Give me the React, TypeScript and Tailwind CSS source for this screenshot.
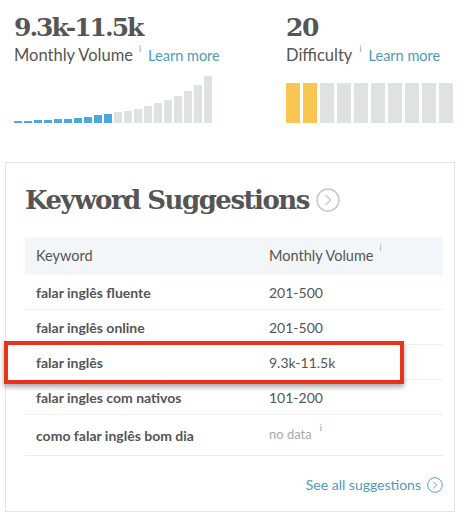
import React from "react"

const volumeBars = [2, 2, 3, 3, 4, 4, 5, 6, 8, 9, 11, 12, 14, 17, 20, 23, 27, 32, 38, 47]

const rows = [
    { keyword: "falar inglês fluente", volume: "201-500" },
    { keyword: "falar inglês online", volume: "201-500" },
    { keyword: "falar inglês", volume: "9.3k-11.5k" },
    { keyword: "falar ingles com nativos", volume: "101-200" },
    { keyword: "como falar inglês bom dia", volume: "no data" },
]

function CircleChevron({ className }: { className?: string }) {
    return (
        <svg viewBox="0 0 24 24" className={className} fill="none" stroke="currentColor" strokeWidth="1.4">
            <circle cx="12" cy="12" r="11" />
            <path d="M10 7.5l4.5 4.5-4.5 4.5" strokeLinecap="round" strokeLinejoin="round" />
        </svg>
    )
}

function Info({ className }: { className?: string }) {
    return <span className={"text-[9px] leading-none text-[#9a9a9a] font-['Lato'] " + (className ?? "")}>i</span>
}

export default function App() {
    return (
        <div className="relative w-[465px] h-[515px] bg-white overflow-hidden font-['Lato','Open_Sans',sans-serif] text-[#555]">
            <div className="flex pt-[12px]">
                <div className="pl-[14px] w-[272px]">
                    <div className="font-['DejaVu_Serif',serif] font-bold text-[25px] leading-[32px] tracking-[-2px] text-[#555]">9.3k-11.5k</div>
                    <div className="flex items-start mt-[1px] h-[20px]">
                        <span className="text-[16.5px] leading-[20px] text-[#555]">Monthly Volume</span>
                        <Info className="ml-[6px] -mt-[1px]" />
                        <span className="ml-[7px] text-[14.5px] leading-[22px] text-[#4d9ab8]">Learn more</span>
                    </div>
                    <div className="flex items-end gap-[2px] h-[48px] mt-[10px]">
                        {volumeBars.map((h, i) => (
                            <div
                                key={i}
                                className={"w-[8px] " + (i < 10 ? "bg-[#4aa8dc]" : "bg-[#dfe2e3]")}
                                style={{ height: h }}
                            />
                        ))}
                    </div>
                </div>
                <div className="pl-[14px]">
                    <div className="font-['DejaVu_Serif',serif] font-bold text-[25px] leading-[32px] tracking-[-1.5px] text-[#555]">20</div>
                    <div className="flex items-start mt-[1px] h-[20px]">
                        <span className="text-[16.5px] leading-[20px] text-[#555]">Difficulty</span>
                        <Info className="ml-[7px] -mt-[1px]" />
                        <span className="ml-[7px] text-[14.5px] leading-[22px] text-[#4d9ab8]">Learn more</span>
                    </div>
                    <div className="flex gap-[3px] h-[40px] mt-[18px]">
                        {Array.from({ length: 10 }).map((_, i) => (
                            <div key={i} className={"w-[14px] " + (i < 2 ? "bg-[#f9c74f]" : "bg-[#dfe2e3]")} />
                        ))}
                    </div>
                </div>
            </div>

            <div className="mx-[5px] mt-[39px] w-[450px] h-[350px] border border-[#e3e3e3] px-[19px]">
                <div className="flex items-center mt-[21px] h-[32px]">
                    <h2 className="font-['DejaVu_Serif',serif] font-bold text-[26px] leading-[32px] tracking-[-1.5px] text-[#555]">Keyword Suggestions</h2>
                    <CircleChevron className="ml-[7px] w-[24px] h-[24px] text-[#c4c4c4]" />
                </div>
                <div className="mt-[21px] w-[418px]">
                    <div className="flex items-center h-[38px] bg-[#f3f6f8] text-[14.5px] text-[#555]">
                        <div className="w-[244px] pl-[11px]">Keyword</div>
                        <div className="flex items-start">
                            <span>Monthly Volume</span>
                            <Info className="ml-[6px] -mt-[2px] text-[#aaa]" />
                        </div>
                    </div>
                    {rows.map((r, i) => (
                        <div key={i} className={"flex items-center text-[14px] " + (i < rows.length - 1 ? "h-[35px] border-b border-[#f0f0f0]" : "h-[41px] border-b border-[#ececec]")}>
                            <div className="w-[244px] pl-[11px] font-bold text-[#555]">{r.keyword}</div>
                            {r.volume === "no data" ? (
                                <div className="flex items-start text-[13px] text-[#aaa]">
                                    <span>no data</span>
                                    <Info className="ml-[8px] -mt-[2px]" />
                                </div>
                            ) : (
                                <div className="text-[#555]">{r.volume}</div>
                            )}
                        </div>
                    ))}
                    <div className="flex justify-end items-center mt-[18px] text-[14px] text-[#4d9ab8]">
                        <span>See all suggestions</span>
                        <CircleChevron className="ml-[6px] w-[16px] h-[16px] text-[#4d9ab8]" />
                    </div>
                </div>
            </div>

            {/* annotation box around the highlighted row */}
            <div className="absolute left-[4px] top-[341px] w-[400px] h-[43px] border-[4px] border-[#e8331b] shadow-[0_3px_5px_rgba(0,0,0,0.35)]" />
        </div>
    )
}
